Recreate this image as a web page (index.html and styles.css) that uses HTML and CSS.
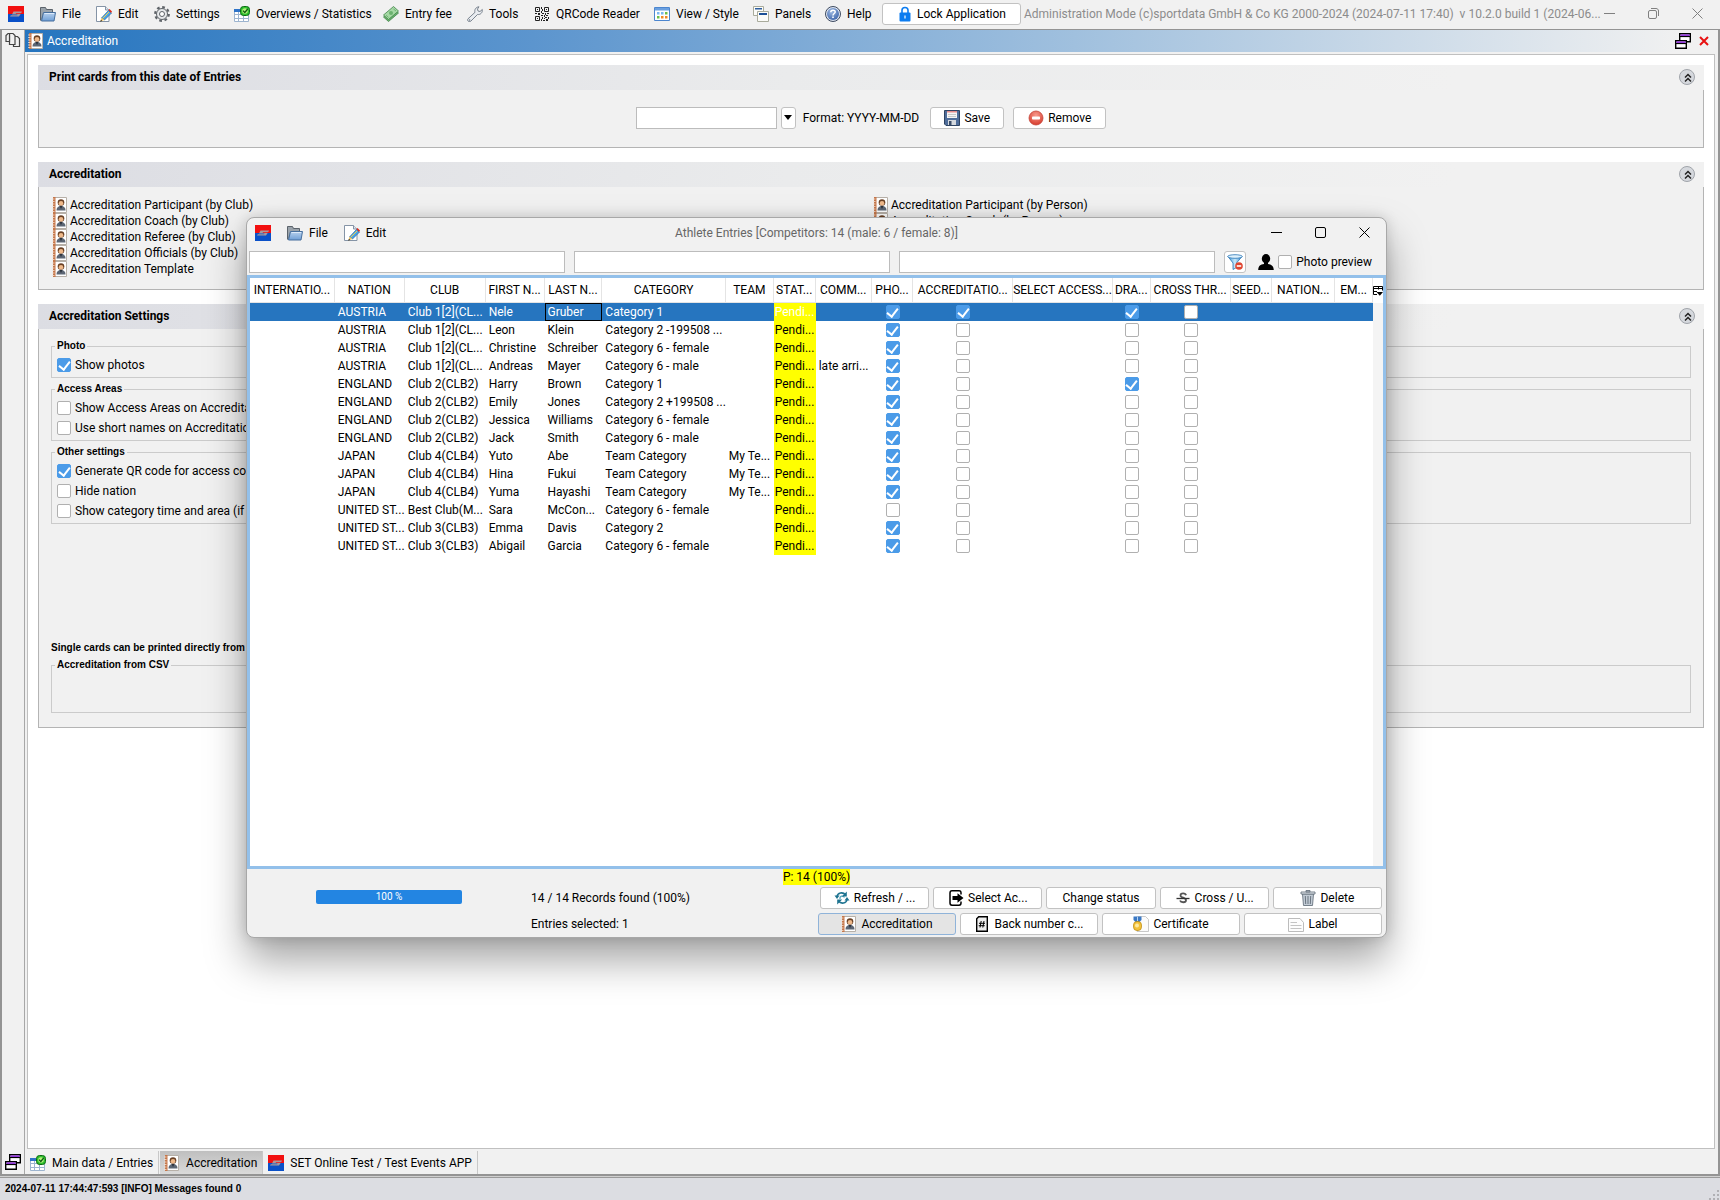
FILE: index.html
```html
<!DOCTYPE html>
<html lang="en">
<head>
<meta charset="utf-8">
<title>Accreditation</title>
<link rel="stylesheet" href="styles.css">
</head>
<body>
<svg class="sprite" aria-hidden="true">
  <defs>
    <linearGradient id="gFolder" x1="0" y1="0" x2="0" y2="1"><stop offset="0" stop-color="#b9d2ee"/><stop offset="1" stop-color="#6f9fd6"/></linearGradient>
    <linearGradient id="gFunnel" x1="0" y1="0" x2="1" y2="0"><stop offset="0" stop-color="#3f9bdc"/><stop offset=".5" stop-color="#c9e8fb"/><stop offset="1" stop-color="#3388cc"/></linearGradient>
    <radialGradient id="gHelp" cx=".4" cy=".3" r=".8"><stop offset="0" stop-color="#9db9e2"/><stop offset="1" stop-color="#3a62a8"/></radialGradient>
    <radialGradient id="gStop" cx=".5" cy=".3" r=".7"><stop offset="0" stop-color="#f79b8e"/><stop offset="1" stop-color="#d73a2c"/></radialGradient>
  </defs>
  <symbol id="logo" viewBox="0 0 16 16"><path fill="#f21010" d="M0 0h16v8H0z"/><path fill="#0a50c8" d="M0 8h16v8H0z"/><path fill="#a8999c" d="M5.500 5.500h8.500l-.7 1.500H8l-.4.700h5.200L11 10.500H2l.8-1.300h6.400l.3-.7H4z"/></symbol>
  <symbol id="folder" viewBox="0 0 16 16"><path fill="#7d868f" stroke="#5b636b" d="M.5 14.500v-13h5l1 2h6v3"/><path fill="#9aa3ab" d="M1 2h4l1 2h6v3H3L1 13z"/><path fill="url(#gFolder)" stroke="#466f9e" d="M3.500 6.500h12l-1.500 8.500H1.500z"/><path stroke="#dceafa" d="M4.500 7.500h9.500"/></symbol>
  <symbol id="edit" viewBox="0 0 16 16"><path fill="#fff" stroke="#8594a6" d="M.5.500h9l3.500 3.500v11.500H.5z"/><path fill="#dfe6ee" stroke="#8594a6" d="M9.500.500V4H13"/><path fill="#4aa3e6" stroke="#1f63a3" stroke-width=".7" d="M12.500 4.500 15.500 7l-7 7-3-2z"/><path fill="#e02818" d="m12.500 4 1-1 2.500 2.500-1 1.500z"/><path fill="#f4c765" d="m5.500 11.500 3 2.500-4 1.500z"/><path fill="#222" d="m5 13.800-.9 2 2-.9z"/><path stroke="#f7d34a" d="m7 12 6-6"/></symbol>
  <symbol id="gear" viewBox="0 0 16 16"><circle cx="8" cy="8" r="6.800" fill="none" stroke="#5e6368" stroke-width="2.200" stroke-dasharray="2.700 2.640"/><circle cx="8" cy="8" r="5.500" fill="#e6e8ea" stroke="#5e6368"/><circle cx="8" cy="8" r="2.500" fill="#fff" stroke="#5e6368"/></symbol>
  <symbol id="grid" viewBox="0 0 16 16"><path fill="#fff" stroke="#9db4cf" d="M.5 3.500h14v12H.5z"/><path fill="#2f74c8" d="M0 3h6v3H0z"/><path stroke="#9db4cf" d="M0 8.500h15M0 12.500h15M4.500 6v9.500M9.500 6v9.500"/><rect x="6.500" y=".5" width="9" height="9" rx="3" fill="#2fc02f" stroke="#0c6b12"/><circle cx="11" cy="5" r="2.800" fill="#b6f07a"/><path fill="none" stroke="#0c5a10" stroke-width="1.300" d="m9 4.600 1.800 1.900 2.900-3.500"/></symbol>
  <symbol id="money" viewBox="0 0 16 16"><path fill="#6bb26f" stroke="#3f8448" stroke-width=".8" d="m.5 11 10-8.500 5 4.500-10 8.500z"/><path fill="#a5d8a4" stroke="#3f8448" stroke-width=".8" d="m.5 9 10-8.500L15.500 5l-10 8.500z"/><circle cx="8" cy="7" r="2" fill="#6bb26f"/><path stroke="#5a9f60" stroke-width=".7" d="m3 9.200 2.500 2.300M10.500 3l2.500 2"/></symbol>
  <symbol id="wrench" viewBox="0 0 16 16"><path fill="#e9ecf0" stroke="#6e7884" stroke-width=".9" d="m1 12.800 7-6.500c-.8-2.500.8-5.300 4-5.500L10.500 3l.5 2 2 .5 2.300-2c.5 3.200-2 5.500-4.800 5L3.800 15.200C2 16.500-.5 14.500 1 12.800z"/><circle cx="2.600" cy="14" r=".8" fill="#6e7884"/></symbol>
  <symbol id="qr" viewBox="0 0 16 16"><path fill="none" stroke="#222" d="M1.500 1.500h4v4h-4zM10.500 1.500h4v4h-4zM1.500 10.500h4v4h-4z"/><path fill="#222" d="M3 3h1v1H3zM12 3h1v1h-1zM3 12h1v1H3zM7 1h1v2H7zM8 3h1v2H8zM7 5h1v2H7zM1 7h2v1H1zM4 7h2v2H4zM8 7h2v1H8zM11 7h1v2h-1zM13 7h2v1h-2zM7 9h2v1H7zM10 9h1v2h-1zM12 9h2v1h-2zM8 11h1v2H8zM11 11h2v1h-2zM14 11h1v2h-1zM7 13h1v2H7zM9 14h2v1H9zM10 12h1v1h-1zM12 13h2v2h-2z"/></symbol>
  <symbol id="view" viewBox="0 0 16 16"><path fill="#fff" stroke="#4c86cf" d="M.5 1.500h15v13H.5z"/><path fill="#6aa0e0" d="M1 2h14v2.500H1z"/><path fill="#7ab8f0" d="M3 6h2.500v2.500H3zM7 6h2.500v2.500H7z"/><path fill="#6cc04a" d="M11 6h2.500v2.500H11z"/><path fill="#6cc04a" d="M3 10h2.500v2.500H3z"/><path fill="#f08a24" d="M7 10h2.500v2.500H7zM11 10h2.500v2.500H11z"/></symbol>
  <symbol id="panels" viewBox="0 0 16 16"><path fill="#fbfbf8" stroke="#a9ab9c" d="M.5.500h10v9H.5z"/><path fill="#2c5d9f" d="M2 2h7v1.500H2z"/><path fill="#fbfbf8" stroke="#a9ab9c" d="M4.500 5.500h11v10h-11z"/><path fill="#1c4f96" d="M6 7h8v2H6z"/></symbol>
  <symbol id="help" viewBox="0 0 16 16"><circle cx="8" cy="8" r="7.500" fill="#dfe6f2" stroke="#3d4a60"/><circle cx="8" cy="8" r="6" fill="url(#gHelp)"/><path fill="none" stroke="#fff" stroke-width="1.500" d="M5.800 6.200C5.800 3.500 10.200 3.600 10.200 6c0 1.500-2.200 1.600-2.200 3.400"/><path fill="#fff" d="M7.200 10.500h1.600V12H7.200z"/></symbol>
  <symbol id="lock" viewBox="0 0 12 16"><path fill="none" stroke="#0c7cf0" stroke-width="1.600" d="M3 7V4.200C3 .500 9 .500 9 4.200V7"/><rect x=".5" y="6.500" width="11" height="9" rx="1" fill="#0c7cf0"/><path fill="#fff" d="M5.400 9.500h1.200v3H5.400z"/></symbol>
  <symbol id="badge" viewBox="0 0 16 16"><path fill="#fff" stroke="#b7b0a8" d="M2.500.500h12v15h-12z"/><path fill="#c6774a" d="M1 0h2.500v16H1z"/><path stroke="#f4e3d8" stroke-width=".8" d="M0 2h2.500M0 4.500h2.500M0 7h2.500M0 9.500h2.500M0 12h2.500M0 14.500h2.500"/><circle cx="9" cy="5.500" r="3.300" fill="#6a4125"/><circle cx="9" cy="6.300" r="2.300" fill="#efb98a"/><path fill="#5c6674" d="M4.500 13.500c0-3 1.500-4.500 4.500-4.500s4.500 1.500 4.500 4.500z"/><path fill="#2c333d" d="m7.500 9 1.500 3 1.500-3z"/></symbol>
  <symbol id="pages" viewBox="0 0 16 16"><g fill="#f1f1f1" stroke="#444" stroke-width="1.200"><path d="M8.500 14.500v-10h4l2 2v8z"/><path d="M4.500 12.500v-11H8l2 2v9z"/><path d="M4.500 9.500H1v-6l2-2h1.500z"/></g></symbol>
  <symbol id="restore" viewBox="0 0 16 16"><path fill="#fff" stroke="#000" stroke-width="1.400" d="M4.700.700h10.600v8H4.700z"/><path fill="#a03cf0" d="M5.400 1.400h9.200V3H5.400z"/><path stroke="#000" stroke-width="1.200" d="M4.700 3.500h10.600"/><path fill="#fff" stroke="#000" stroke-width="1.400" d="M.7 7.700h10.600v7.600H.7z"/><path fill="#a03cf0" d="M1.400 8.400h9.200V10H1.400z"/><path stroke="#000" stroke-width="1.200" d="M.7 10.500h10.600"/></symbol>
  <symbol id="redx" viewBox="0 0 10 10"><path stroke="#e81010" stroke-width="2" d="m1 1 8 8M9 1 1 9"/></symbol>
  <symbol id="chev" viewBox="0 0 16 16"><path fill="none" stroke="#222" stroke-width="1.500" d="m5 7.500 3-3 3 3M5 11.500l3-3 3 3"/></symbol>
  <symbol id="floppy" viewBox="0 0 16 16"><path fill="#4f6d9a" stroke="#2f4463" d="M.5.500h15v15H2l-1.500-1.500z"/><path fill="#f5f5f5" d="M3 1h10v7H3z"/><path fill="#e48b8b" d="M3 1h10v1.500H3z"/><path stroke="#c9c9c9" d="M4 4.500h8M4 6.500h8"/><path fill="#d5d9de" d="M4 10h8v5H4z"/><path fill="#3b4d68" d="M5 11h2.500v4H5z"/></symbol>
  <symbol id="stop" viewBox="0 0 16 16"><circle cx="8" cy="8" r="7" fill="url(#gStop)" stroke="#c4453a" stroke-width=".8"/><rect x="4" y="6.500" width="8" height="3" rx=".8" fill="#fff"/></symbol>
  <symbol id="funnel" viewBox="0 0 16 16"><path fill="url(#gFunnel)" stroke="#2773b5" stroke-width=".8" d="M1 2.500 6 9v6.500l3.500-2V9L15 2.500z"/><ellipse cx="8" cy="2.500" rx="7.300" ry="1.800" fill="#dff1fc" stroke="#2773b5" stroke-width=".8"/><circle cx="12" cy="12" r="3.800" fill="#df4632"/><path fill="#fff" d="M9.800 11.200h4.400v1.600H9.800z"/></symbol>
  <symbol id="person" viewBox="0 0 16 16"><ellipse cx="8" cy="4.700" rx="4.200" ry="4.700"/><path d="M6 8h4v2c3.500.5 5.500 1.500 5.800 6H.2C.5 11.500 2.500 10.500 6 10z"/></symbol>
  <symbol id="colctl" viewBox="0 0 10 10"><path fill="none" stroke="#000" d="M.5 8.500v-8h9v4M5.500.500v3M.5 2.500h9M.5 5.500H4M.5 8.500H4"/><path d="M3.500 6h6.500L6.800 9.800z"/></symbol>
  <symbol id="refresh" viewBox="0 0 16 16"><g fill="none" stroke="#1d7390" stroke-width="1.600"><path d="M3 6.500C3.500 2.500 9 1.500 11.500 5"/><path d="M13 9.500c-.5 4-6 5-8.500 1.500"/><path stroke="#58a9bf" stroke-width="1.300" d="M6 9C5.500 6 9 5 10.500 7.500"/></g><path fill="#1d7390" d="M12.800 1.500v5h-5zM3.200 14.500v-5h5zM.5 5.500h5L3 9zM15.500 10.500h-5L13 7z"/></symbol>
  <symbol id="enter" viewBox="0 0 16 16"><path fill="none" stroke="#000" stroke-width="1.500" d="M13 4.500V3c0-1.500-.5-2.200-2-2.200H4C2.500.800 2 1.500 2 3v10c0 1.500.5 2.200 2 2.200h7c1.500 0 2-.7 2-2.200v-1.500"/><path d="M4.500 6h5V3.300L15.500 8l-6 4.700V10h-5z"/></symbol>
  <symbol id="strike" viewBox="0 0 16 16"><path fill="none" stroke="#555" stroke-width="1.800" d="M11 5.200C10.500 2.800 5.500 2.600 5.500 5.400c0 2.900 5.500 1.700 5.500 4.800 0 2.800-5.200 2.600-6 .3"/><path stroke="#333" stroke-width="1.300" d="M1.500 8.500h13"/></symbol>
  <symbol id="trash" viewBox="0 0 16 16"><path fill="#c3ccd6" stroke="#69747f" stroke-width=".9" d="M2.500 4h11l-1 11.500h-9z"/><path fill="#e6ebf0" stroke="#69747f" stroke-width=".9" d="M1 2h14v2H1zM6 .500h4V2H6z"/><path stroke="#69747f" d="M5.300 6l.4 8M8 6v8M10.700 6l-.4 8"/></symbol>
  <symbol id="hash" viewBox="0 0 16 16"><path fill="#eee" stroke="#000" stroke-width="1.400" d="M2.700 15.300V2.700l2-2h8.600v14.600z"/><path fill="none" stroke="#000" d="M7.200 5 6 11.500M10 5 8.800 11.500M5 7.300h6M4.700 9.700h6"/></symbol>
  <symbol id="medal" viewBox="0 0 16 16"><path fill="#fbfbfb" stroke="#bbb" stroke-width=".8" d="M4 .500h8.500l3 3v12H4z"/><path fill="#3a78c4" d="M.5.500h8V4l-2 2h-4l-2-2z"/><path stroke="#b7d2f0" d="M4.500.500V5"/><rect x=".5" y="5.500" width="8" height="9" rx="3.500" fill="#f3c13a" stroke="#b8860b" stroke-width=".7"/><circle cx="4" cy="9.500" r="2" fill="#fde9a0"/></symbol>
  <symbol id="sheet" viewBox="0 0 16 16"><path fill="#fdfdfd" stroke="#b4b4b4" stroke-width=".9" d="M.5 2.500h11.500l3.500 4v9H.5z"/><path stroke="#c4c4c4" d="M2.500 6.500H9M2.500 9.500h11M2.500 12.500h11"/></symbol>
</svg>

<div class="app">
  <header class="menubar">
    <svg class="ic"><use href="#logo"/></svg>
    <nav class="menus">
      <button class="menu"><svg class="ic"><use href="#folder"/></svg>File</button>
      <button class="menu"><svg class="ic"><use href="#edit"/></svg>Edit</button>
      <button class="menu"><svg class="ic"><use href="#gear"/></svg>Settings</button>
      <button class="menu"><svg class="ic"><use href="#grid"/></svg>Overviews / Statistics</button>
      <button class="menu"><svg class="ic"><use href="#money"/></svg>Entry fee</button>
      <button class="menu"><svg class="ic"><use href="#wrench"/></svg>Tools</button>
      <button class="menu"><svg class="ic"><use href="#qr"/></svg>QRCode Reader</button>
      <button class="menu"><svg class="ic"><use href="#view"/></svg>View / Style</button>
      <button class="menu"><svg class="ic"><use href="#panels"/></svg>Panels</button>
      <button class="menu"><svg class="ic"><use href="#help"/></svg>Help</button>
    </nav>
    <button class="btn lock"><svg class="ic"><use href="#lock"/></svg>Lock Application</button>
    <span class="apptitle">Administration Mode (c)sportdata GmbH &amp; Co KG 2000-2024 (2024-07-11 17:40)&nbsp; v 10.2.0 build 1 (2024-06...</span>
    <div class="wincontrols dim">
      <button aria-label="Minimize"><svg viewBox="0 0 11 11"><path d="M0 5.500h11"/></svg></button>
      <button aria-label="Restore"><svg viewBox="0 0 11 11"><rect x=".5" y="2.500" width="8" height="8" rx="1.500"/><path d="M3 .500h5c1.500 0 2.500 1 2.500 2.500v5"/></svg></button>
      <button aria-label="Close"><svg viewBox="0 0 11 11"><path d="m.5.500 10 10M10.500.500l-10 10"/></svg></button>
    </div>
  </header>

  <div class="frame">
    <aside class="rail">
      <button aria-label="Windows"><svg class="ic"><use href="#pages"/></svg></button>
      <button aria-label="Restore panel"><svg class="ic"><use href="#restore"/></svg></button>
    </aside>
    <div class="main">
      <div class="titlebar">
        <svg class="ic"><use href="#badge"/></svg><h1>Accreditation</h1>
        <button aria-label="Restore"><svg class="ic"><use href="#restore"/></svg></button>
        <button aria-label="Close"><svg class="x"><use href="#redx"/></svg></button>
      </div>
      <main class="content">
        <section class="card">
          <header><h2>Print cards from this date of Entries</h2><button class="collapse" aria-label="Collapse"><svg class="ic"><use href="#chev"/></svg></button></header>
          <div class="body daterow">
            <input class="field date" id="date" type="text">
            <button class="btn drop" aria-label="Choose date"></button>
            <label for="date">Format: YYYY-MM-DD</label>
            <button class="btn save"><svg class="ic"><use href="#floppy"/></svg>Save</button>
            <button class="btn remove"><svg class="ic"><use href="#stop"/></svg>Remove</button>
          </div>
        </section>
        <section class="card">
          <header><h2>Accreditation</h2><button class="collapse" aria-label="Collapse"><svg class="ic"><use href="#chev"/></svg></button></header>
          <div class="body links">
            <ul>
              <li><a href="#"><svg class="ic"><use href="#badge"/></svg>Accreditation Participant (by Club)</a></li>
              <li><a href="#"><svg class="ic"><use href="#badge"/></svg>Accreditation Coach (by Club)</a></li>
              <li><a href="#"><svg class="ic"><use href="#badge"/></svg>Accreditation Referee (by Club)</a></li>
              <li><a href="#"><svg class="ic"><use href="#badge"/></svg>Accreditation Officials (by Club)</a></li>
              <li><a href="#"><svg class="ic"><use href="#badge"/></svg>Accreditation Template</a></li>
            </ul>
            <ul>
              <li><a href="#"><svg class="ic"><use href="#badge"/></svg>Accreditation Participant (by Person)</a></li>
              <li><a href="#"><svg class="ic"><use href="#badge"/></svg>Accreditation Coach (by Person)</a></li>
            </ul>
          </div>
        </section>
        <section class="card">
          <header><h2>Accreditation Settings</h2><button class="collapse" aria-label="Collapse"><svg class="ic"><use href="#chev"/></svg></button></header>
          <div class="body settings">
            <fieldset><legend>Photo</legend>
              <label class="opt"><input type="checkbox" checked>Show photos</label>
            </fieldset>
            <fieldset><legend>Access Areas</legend>
              <label class="opt"><input type="checkbox">Show Access Areas on Accreditat</label>
              <label class="opt"><input type="checkbox">Use short names on Accreditatio</label>
            </fieldset>
            <fieldset><legend>Other settings</legend>
              <label class="opt"><input type="checkbox" checked>Generate QR code for access con</label>
              <label class="opt"><input type="checkbox">Hide nation</label>
              <label class="opt"><input type="checkbox">Show category time and area (if a</label>
            </fieldset>
            <p class="note">Single cards can be printed directly from</p>
            <fieldset class="csv"><legend>Accreditation from CSV</legend></fieldset>
          </div>
        </section>
      </main>
      <nav class="tabs">
        <button><svg class="ic"><use href="#grid"/></svg>Main data / Entries</button>
        <button class="active"><svg class="ic"><use href="#badge"/></svg>Accreditation</button>
        <button><svg class="ic"><use href="#logo"/></svg>SET Online Test / Test Events APP</button>
      </nav>
    </div>
  </div>
  <footer class="status">2024-07-11 17:44:47:593 [INFO] Messages found 0
    <svg class="grip" viewBox="0 0 10 10"><path d="M8 0h2v2H8zM8 4h2v2H8zM4 4h2v2H4zM8 8h2v2H8zM4 8h2v2H4zM0 8h2v2H0z"/></svg>
  </footer>
</div>

<div class="dialog" role="dialog" aria-labelledby="dlgtitle">
  <header class="dlghead">
    <div class="dlgmenus">
      <svg class="ic"><use href="#logo"/></svg>
      <button class="menu"><svg class="ic"><use href="#folder"/></svg>File</button>
      <button class="menu"><svg class="ic"><use href="#edit"/></svg>Edit</button>
    </div>
    <span class="dlgtitle" id="dlgtitle">Athlete Entries [Competitors: 14 (male: 6 / female: 8)]</span>
    <div class="wincontrols">
      <button aria-label="Minimize"><svg viewBox="0 0 11 11"><path d="M0 5.500h11"/></svg></button>
      <button aria-label="Maximize"><svg viewBox="0 0 11 11"><rect x=".5" y=".5" width="10" height="10" rx="1.500"/></svg></button>
      <button aria-label="Close"><svg viewBox="0 0 11 11"><path d="m.5.500 10 10M10.500.500l-10 10"/></svg></button>
    </div>
  </header>
  <div class="filters">
    <input class="field" type="text" aria-label="Filter 1">
    <input class="field" type="text" aria-label="Filter 2">
    <input class="field" type="text" aria-label="Filter 3">
    <button class="btn clear" aria-label="Clear filter"><svg class="ic"><use href="#funnel"/></svg></button>
    <label class="preview"><svg class="ic"><use href="#person"/></svg><input type="checkbox">Photo preview</label>
  </div>
  <div class="gridbox">
    <table class="entries">
      <colgroup><col class="w85"><col class="w70"><col class="w81"><col class="w59"><col class="w58"><col class="w123"><col class="w48"><col class="w42"><col class="w56"><col class="w42"><col class="w100"><col class="w98"><col class="w38"><col class="w80"><col class="w42"><col class="w63"><col class="w38"></colgroup>
      <thead><tr><th>INTERNATIO...</th><th>NATION</th><th>CLUB</th><th>FIRST N...</th><th>LAST N...</th><th>CATEGORY</th><th>TEAM</th><th>STAT...</th><th>COMM...</th><th>PHO...</th><th>ACCREDITATIO...</th><th>SELECT ACCESS...</th><th>DRA...</th><th>CROSS THR...</th><th>SEED...</th><th>NATION...</th><th>EM...</th></tr></thead>
      <tbody id="rows"></tbody>
    </table>
    <div class="gutter"><button aria-label="Columns"><svg><use href="#colctl"/></svg></button></div>
  </div>
  <footer class="dlgfoot">
    <div class="sum"><mark>P: 14 (100%)</mark></div>
    <div class="footrow">
      <div class="bar">100 %</div>
      <span class="info">14 / 14 Records found (100%)</span>
      <div class="btns five">
        <button class="btn"><svg class="ic"><use href="#refresh"/></svg>Refresh / ...</button>
        <button class="btn"><svg class="ic"><use href="#enter"/></svg>Select Ac...</button>
        <button class="btn">Change status</button>
        <button class="btn"><svg class="ic"><use href="#strike"/></svg>Cross / U...</button>
        <button class="btn"><svg class="ic"><use href="#trash"/></svg>Delete</button>
      </div>
    </div>
    <div class="footrow">
      <div></div>
      <span class="info">Entries selected: 1</span>
      <div class="btns four">
        <button class="btn on"><svg class="ic"><use href="#badge"/></svg>Accreditation</button>
        <button class="btn"><svg class="ic"><use href="#hash"/></svg>Back number c...</button>
        <button class="btn"><svg class="ic"><use href="#medal"/></svg>Certificate</button>
        <button class="btn"><svg class="ic"><use href="#sheet"/></svg>Label</button>
      </div>
    </div>
  </footer>
</div>
<script src="entries.js"></script>
</body>
</html>
```
FILE: styles.css
```css
* { box-sizing: border-box; }
body { margin: 0; font: 12px/16px Roboto, "Open Sans", sans-serif; color: #000; background: #fff; }
h1, h2, p, ul { margin: 0; padding: 0; font-size: 12px; font-weight: 400; }
ul { list-style: none; }
a { color: inherit; text-decoration: none; }
button { font: inherit; color: inherit; background: none; border: 0; padding: 0; margin: 0; white-space: nowrap; }
svg { display: block; flex: none; }
.sprite { position: absolute; width: 0; height: 0; }
.ic { width: 16px; height: 16px; }

.app { display: flex; flex-direction: column; min-height: 100vh; background: #f1f1f1; }

.menubar { display: flex; align-items: center; height: 29px; padding: 0 1px 2px 8px; }
.menus { display: grid; grid-template-columns: 56px 58px 80px 149px 84px 67px 120px 99px 72px 57px; margin-left: 16px; }
.menu { display: flex; align-items: center; gap: 6px; }
.btn { display: inline-flex; align-items: center; justify-content: center; height: 22px; background: #fff; border: 1px solid #c2c2c2; border-radius: 3px; }
.lock { width: 139px; gap: 4px; }
.apptitle { flex: 1; min-width: 0; margin-left: 3px; color: #8c8c8c; white-space: nowrap; }
.wincontrols { display: flex; }
.wincontrols button { display: grid; place-items: center; width: 44px; height: 24px; }
.wincontrols svg { width: 11px; height: 11px; fill: none; stroke: #000; }
.dim svg { stroke: #808080; }

.frame { flex: 1; display: flex; border: 2px solid #949494; border-top-width: 1px; }
.rail { display: flex; flex-direction: column; justify-content: space-between; align-items: center; width: 23px; padding: 2px 0 4px; border-right: 1px solid #a8a8a8; }
.main { flex: 1; min-width: 0; display: flex; flex-direction: column; }
.titlebar { display: flex; align-items: center; height: 22px; padding: 0 9px 0 3px; color: #fff; background: linear-gradient(90deg, #2675bf 0%, #5c95ce 30%, #a0c0de 62%, #f1f1f1 98%); }
.titlebar h1 { flex: 1; margin-left: 3px; }
.titlebar button { margin-left: 8px; }
.x { width: 10px; height: 10px; }

.content { flex: 1; display: flex; flex-direction: column; gap: 14px; margin: 2px 3px 0 2px; padding: 10px; background: #fff; border: 1px solid #c0c0c0; }
.card header { display: flex; align-items: center; justify-content: space-between; height: 25px; padding: 0 9px 2px 11px; background: linear-gradient(100deg, #dcdde3, #eaebec 45%, #f1f1f1 85%); }
.card h2 { font-weight: 700; }
.collapse { display: grid; place-items: center; width: 16px; height: 16px; border: 1px solid #a0a4aa; border-radius: 8px; background: #d5d8dd; }
.body { background: #f1f1f1; border: 1px solid #b4b4b4; border-top: 0; }
.field { height: 22px; border: 1px solid #bcbcbc; background: #fff; padding: 0 4px; font: inherit; min-width: 0; }

.daterow { display: flex; justify-content: center; align-items: center; height: 58px; padding-bottom: 2px; }
.date { width: 141px; margin-right: 4px; }
.drop { width: 15px; margin-right: 7px; }
.drop::before { content: ""; border: 4px solid transparent; border-top: 5px solid #000; border-bottom: 0; }
.save { width: 74px; gap: 4px; margin: 0 9px 0 11px; }
.remove { width: 93px; gap: 4px; }

.links { display: grid; grid-template-columns: 1fr 830px; padding: 10px 0 12px 13px; }
.links a { display: flex; gap: 2px; }

.settings { display: flex; flex-direction: column; gap: 5px; padding: 11px 12px 14px; }
fieldset { margin: 0; padding: 3px 5px 2px; border: 1px solid #cbcbcb; min-width: 0; }
legend { padding: 0 2px; margin-left: -2px; }
legend, .note, .status { font: bold 10px/12px "Liberation Sans", Arial, sans-serif; }
.opt { display: flex; align-items: center; gap: 4px; height: 20px; }
input[type=checkbox] { appearance: none; display: grid; place-items: center; flex: none; width: 14px; height: 14px; margin: 0; border: 1px solid #b0b0b0; border-radius: 2px; background: #fff; }
input[type=checkbox]:checked { background: #4b9be8; border-color: #4b9be8; }
input[type=checkbox]:checked::before { content: ""; width: 5px; height: 9px; margin-bottom: 2px; border: solid #fff; border-width: 0 2px 2px 0; transform: rotate(38deg); }
.note { margin-top: 113px; }
.csv { min-height: 54px; }

.tabs { display: flex; height: 25px; padding: 2px 0 0 1px; }
.tabs button { display: flex; align-items: center; gap: 6px; padding: 0 5px 0 4px; border-right: 1px solid #c8c8c8; margin-right: 1px; }
.tabs .active { background: linear-gradient(#bfbfbf, #dadada); }

.status { display: flex; justify-content: space-between; align-items: center; height: 24px; padding: 0 1px 0 5px; background: #dcdde2; border-top: 1px solid #d0d0d0; box-shadow: inset 0 1px #9a9a9a; }
.grip { width: 10px; height: 10px; align-self: flex-end; fill: #b0b0b4; }

.dialog { position: absolute; inset: 217px 333px 262px 246px; display: flex; flex-direction: column; background: #f1f1f1; border: 1px solid #a8a8a8; border-radius: 8px; box-shadow: 0 22px 40px rgba(0,0,0,.36), 0 0 14px rgba(0,0,0,.14); }
.dlghead { display: grid; grid-template-columns: 1fr auto 1fr; align-items: center; height: 33px; padding-bottom: 4px; }
.dlgmenus { display: flex; gap: 16px; padding-left: 8px; }
.dlghead .wincontrols { justify-self: end; }
.dlgtitle { color: #666; }
.filters { display: flex; align-items: center; gap: 9px; padding: 0 14px 2px 2px; }
.filters .field { flex: 1; }
.clear { width: 22px; }
.preview { display: flex; align-items: center; gap: 4px; margin-left: 3px; white-space: nowrap; }

.gridbox { flex: 1; min-height: 0; display: flex; border: 3px solid #93c0ea; background: #fff; overflow: hidden; }
.entries { flex: 1; min-width: 0; align-self: flex-start; table-layout: fixed; border-collapse: separate; border-spacing: 0; }
.entries th { height: 25px; padding: 0; border-right: 1px solid #e4e4e4; border-bottom: 1px solid #e4e4e4; font-weight: 400; white-space: nowrap; }
.entries td { height: 18px; padding: 0 0 0 3px; white-space: nowrap; }
.entries td.check { padding: 0; }
.check input { margin: 0 auto 1px !important; }
.entries .pending { padding-left: 1px; background: #ff0; }
.sel { background: #2675bf; color: #fff; }
.sel .focus { box-shadow: inset 0 0 0 1px #000; }
.w85 { width: 85px; } .w70 { width: 70px; } .w81 { width: 81px; } .w59 { width: 59px; } .w58 { width: 58px; }
.w123 { width: 123px; } .w48 { width: 48px; } .w42 { width: 42px; } .w56 { width: 56px; } .w100 { width: 100px; }
.w98 { width: 98px; } .w38 { width: 38px; } .w80 { width: 80px; } .w63 { width: 63px; }
.gutter { width: 10px; background: #f4f4f4; }
.gutter button { display: grid; place-items: center; width: 10px; height: 25px; background: #fff; }
.gutter svg { width: 10px; height: 10px; }

.sum { height: 16px; text-align: center; }
mark { display: inline-block; background: #ff0; }
.footrow { display: grid; grid-template-columns: 284px 1fr 564px; align-items: center; padding: 2px 4px 2px 0; }
.bar { width: 146px; height: 14px; margin: 0 0 2px 69px; background: #2385e2; border-radius: 2px; color: #fff; font-size: 10px; line-height: 14px; text-align: center; }
.btns { display: grid; gap: 4px; }
.btns .btn { gap: 4px; }
.five { grid-template-columns: repeat(5, 1fr); padding-left: 2px; }
.four { grid-template-columns: repeat(4, 1fr); }
.on { background: #e4e4e4; border-color: #8fb3d9; }
```
FILE: entries.js
```javascript
// nation, club, first name, last name, category, team, comment, photo, accreditation, draw
const entries = [
  ["AUSTRIA", "Club 1[2](CL...", "Nele", "Gruber", "Category 1", "", "", 1, 1, 1],
  ["AUSTRIA", "Club 1[2](CL...", "Leon", "Klein", "Category 2 -199508 ...", "", "", 1, 0, 0],
  ["AUSTRIA", "Club 1[2](CL...", "Christine", "Schreiber", "Category 6 - female", "", "", 1, 0, 0],
  ["AUSTRIA", "Club 1[2](CL...", "Andreas", "Mayer", "Category 6 - male", "", "late arri...", 1, 0, 0],
  ["ENGLAND", "Club 2(CLB2)", "Harry", "Brown", "Category 1", "", "", 1, 0, 1],
  ["ENGLAND", "Club 2(CLB2)", "Emily", "Jones", "Category 2 +199508 ...", "", "", 1, 0, 0],
  ["ENGLAND", "Club 2(CLB2)", "Jessica", "Williams", "Category 6 - female", "", "", 1, 0, 0],
  ["ENGLAND", "Club 2(CLB2)", "Jack", "Smith", "Category 6 - male", "", "", 1, 0, 0],
  ["JAPAN", "Club 4(CLB4)", "Yuto", "Abe", "Team Category", "My Te...", "", 1, 0, 0],
  ["JAPAN", "Club 4(CLB4)", "Hina", "Fukui", "Team Category", "My Te...", "", 1, 0, 0],
  ["JAPAN", "Club 4(CLB4)", "Yuma", "Hayashi", "Team Category", "My Te...", "", 1, 0, 0],
  ["UNITED ST...", "Best Club(M...", "Sara", "McCon...", "Category 6 - female", "", "", 0, 0, 0],
  ["UNITED ST...", "Club 3(CLB3)", "Emma", "Davis", "Category 2", "", "", 1, 0, 0],
  ["UNITED ST...", "Club 3(CLB3)", "Abigail", "Garcia", "Category 6 - female", "", "", 1, 0, 0]
];
const cell = (text, cls) => `<td${cls ? ` class="${cls}"` : ""}>${text}</td>`;
const tick = (on, name) => `<td class="check"><input type="checkbox" aria-label="${name}"${on ? " checked" : ""}></td>`;
document.getElementById("rows").innerHTML = entries.map((e, i) =>
  `<tr${i === 0 ? ' class="sel"' : ""}>` +
  cell("") + cell(e[0]) + cell(e[1]) + cell(e[2]) + cell(e[3], i === 0 ? "focus" : "") + cell(e[4]) + cell(e[5]) +
  cell("Pendi...", "pending") + cell(e[6]) + tick(e[7], "Photo") + tick(e[8], "Accreditation") + cell("") +
  tick(e[9], "Draw") + tick(0, "Cross through") + cell("") + cell("") + cell("") + "</tr>").join("");
```
